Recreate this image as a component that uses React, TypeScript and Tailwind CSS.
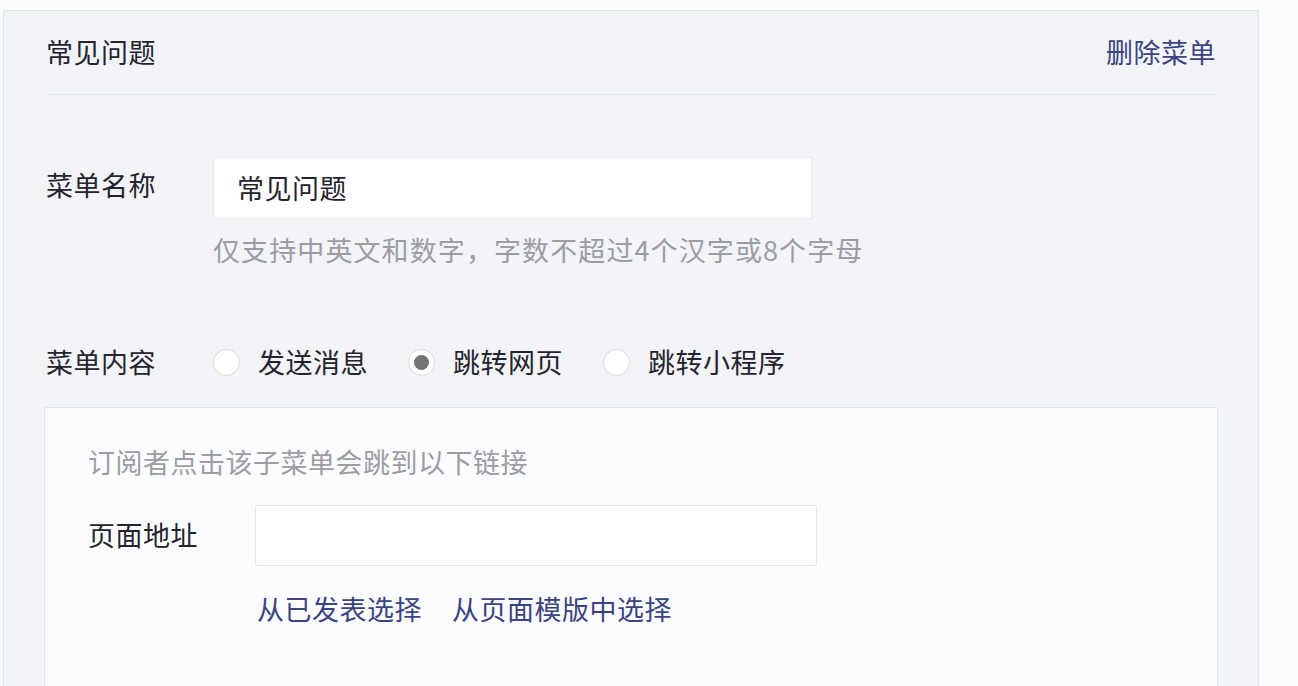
import React from "react";

const font = { fontFamily: '"Noto Sans CJK SC", "Noto Sans", sans-serif' };

function Radio({ label, checked }: { label: string; checked?: boolean }) {
  return (
    <label className="flex items-center gap-[18px] mr-[40px]">
      <span className="w-[27px] h-[27px] rounded-full border border-[#d6d9df] bg-white flex items-center justify-center">
        {checked && <span className="w-[15px] h-[15px] rounded-full bg-[#737373]" />}
      </span>
      <span className="text-[27px] tracking-[0.5px] text-[#25232e]">{label}</span>
    </label>
  );
}

export default function App() {
  return (
    <div className="w-[1298px] h-[686px] overflow-hidden bg-[#fbfcfd] pt-[10px] pl-[3px]" style={font}>
      <div className="w-[1256px] h-[700px] bg-[#f2f4f8] border border-[#e1e4eb] px-[42px]">
        {/* header */}
        <div className="flex items-center justify-between h-[84px] border-b border-[#e3e6ed]">
          <span className="text-[27px] tracking-[0.5px] text-[#25232e]">常见问题</span>
          <button className="text-[27px] tracking-[0.5px] text-[#3b4381]">删除菜单</button>
        </div>

        {/* menu name */}
        <div className="flex mt-[62px]">
          <div className="w-[167px] pt-[12px] text-[27px] leading-[32px] tracking-[0.5px] text-[#25232e]">菜单名称</div>
          <div>
            <div className="w-[599px] h-[62px] bg-white border border-[#e6e8ee] rounded-[2px] flex items-center px-[23px] text-[27px] tracking-[0.5px] text-[#25232e]">
              常见问题
            </div>
            <div className="mt-[15px] text-[27px] leading-[32px] tracking-[1.1px] text-[#9c9ca4]">
              仅支持中英文和数字，字数不超过4个汉字或8个字母
            </div>
          </div>
        </div>

        {/* menu content */}
        <div className="flex items-center mt-[76px] h-[40px]">
          <div className="w-[167px] text-[27px] tracking-[0.5px] text-[#25232e]">菜单内容</div>
          <div className="flex items-center">
            <Radio label="发送消息" />
            <Radio label="跳转网页" checked />
            <Radio label="跳转小程序" />
          </div>
        </div>

        <div className="-ml-[2px] mt-[25px] w-[1174px] h-[320px] bg-[#fbfcfe] border border-[#dfe3ea] rounded-[2px] pl-[43px] pt-[38px]">
          <div className="text-[27px] leading-[32px] tracking-[0.5px] text-[#9c9ca4]">订阅者点击该子菜单会跳到以下链接</div>
          <div className="flex items-center mt-[27px]">
            <div className="w-[167px] text-[27px] tracking-[0.5px] text-[#25232e]">页面地址</div>
            <div className="w-[562px] h-[61px] bg-white border border-[#e6e8ee] rounded-[2px]" />
          </div>
          <div className="flex gap-[30px] ml-[169px] mt-[27px] text-[27px] leading-[32px] tracking-[0.5px] text-[#3b4381]">
            <button>从已发表选择</button>
            <button>从页面模版中选择</button>
          </div>
        </div>
      </div>
    </div>
  );
}
